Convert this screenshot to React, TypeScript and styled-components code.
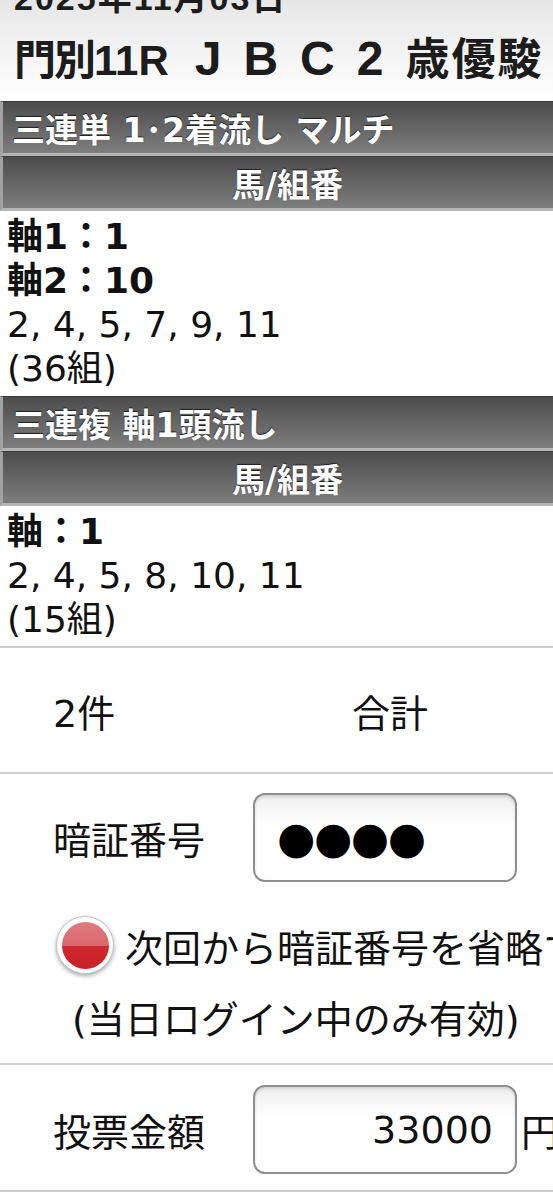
import React, { ReactElement } from 'react';
import styled, { createGlobalStyle } from 'styled-components';

const bodyFont = `"DejaVu Sans", "Noto Sans CJK JP", sans-serif`;
const headFont = `"Liberation Sans", "Noto Sans CJK JP", sans-serif`;

const GlobalStyle = createGlobalStyle`
  html, body {
    margin: 0;
    padding: 0;
    background: #ffffff;
    overflow: hidden;
  }
  body {
    font-family: ${bodyFont};
    color: #111111;
  }
`;

const Page = styled.div`
  width: 572px;
  overflow: hidden;
`;

const Header = styled.header`
  margin-top: -26px;
  padding: 0 0 12px 14px;
  background: linear-gradient(#e0e0e0, #f3f3f3 60%, #ffffff);
  font-family: ${headFont};
  color: #1c1c1c;
  white-space: nowrap;
`;

const DateLine = styled.div`
  font-size: 34px;
  line-height: 48px;
  font-weight: 700;
  letter-spacing: 2px;
`;

const Title = styled.h1`
  margin: 9px 0 0;
  font-size: 44px;
  line-height: 56px;
  font-weight: 700;
`;

const TitlePart = styled.span<{ $size?: number; $spacing?: number; $shift?: number }>`
  font-size: ${(p) => p.$size ?? 44}px;
  letter-spacing: ${(p) => p.$spacing ?? 0}px;
  margin-left: ${(p) => p.$shift ?? 0}px;
`;

const Bar = styled.div<{ $center?: boolean }>`
  box-sizing: border-box;
  height: 55px;
  display: flex;
  align-items: center;
  justify-content: ${(p) => (p.$center ? 'center' : 'flex-start')};
  padding-left: ${(p) => (p.$center ? 0 : 9)}px;
  border-top: 1px solid #3a3a3a;
  border-bottom: 3px solid #b4b4b4;
  border-left: 3px solid #a2a2a2;
  background: linear-gradient(#4c4c4c, #7e7e7e);
  color: #ffffff;
  font-size: 33px;
  font-weight: 700;
  text-shadow: 0 -1px 1px #1e1e1e;
  white-space: nowrap;
`;

const Picks = styled.div<{ $divider?: boolean }>`
  padding: 4px 0 ${(p) => (p.$divider ? 4 : 5)}px 7px;
  font-size: 36px;
  line-height: 44px;
  border-bottom: ${(p) => (p.$divider ? '2px solid #cfcfcf' : 'none')};
`;

const PickLine = styled.div<{ $bold?: boolean }>`
  font-weight: ${(p) => (p.$bold ? 700 : 400)};
  white-space: nowrap;
`;

const Summary = styled.div`
  height: 124px;
  display: grid;
  grid-template-columns: 299px auto;
  align-items: center;
  padding-left: 53px;
  font-size: 38px;
  border-bottom: 2px solid #cfcfcf;
`;

const Block = styled.div<{ $top: number; $bottom: number }>`
  padding: ${(p) => p.$top}px 0 ${(p) => p.$bottom}px;
  border-bottom: 2px solid #cfcfcf;
  font-size: 38px;
  white-space: nowrap;
`;

const FieldRow = styled.div`
  display: grid;
  grid-template-columns: 200px 264px auto;
  align-items: center;
  padding-left: 53px;
`;

const InputBox = styled.div<{ $alignRight?: boolean }>`
  box-sizing: border-box;
  height: 89px;
  display: flex;
  align-items: center;
  justify-content: ${(p) => (p.$alignRight ? 'flex-end' : 'flex-start')};
  padding: 0 22px;
  border: 2px solid #8e8e8e;
  border-radius: 12px;
  background: linear-gradient(#eeeeee, #ffffff 35%);
  box-shadow: inset 0 2px 3px rgba(0, 0, 0, 0.12);
`;

const Mask = styled.span`
  font-size: 44px;
  letter-spacing: -1.5px;
  color: #000000;
`;

const Amount = styled.span`
  font-size: 38px;
  color: #111111;
`;

const Unit = styled.span`
  margin-left: 4px;
`;

const CheckRow = styled.label`
  display: flex;
  align-items: center;
  gap: 11px;
  margin-top: 33px;
  padding-left: 56px;
  height: 60px;
`;

const Radio = styled.span`
  flex: none;
  box-sizing: border-box;
  width: 58px;
  height: 58px;
  border-radius: 50%;
  background: #ffffff;
  border: 1px solid #c4c4c4;
  box-shadow: 0 2px 4px rgba(0, 0, 0, 0.35);
  display: flex;
  align-items: center;
  justify-content: center;

  &::after {
    content: '';
    width: 47px;
    height: 47px;
    border-radius: 50%;
    background: linear-gradient(#e07c82, #d8666c 50%, #d0282e 50%, #c62126);
  }
`;

const Note = styled.div`
  padding-left: 72px;
  margin-top: 20px;
  line-height: 50px;
`;

interface PickSectionProps {
  title: string;
  axes: string[];
  others: string;
  count: string;
  divider?: boolean;
}

function PickSection({ title, axes, others, count, divider }: PickSectionProps): ReactElement {
  return (
    <section>
      <Bar>{title}</Bar>
      <Bar $center>馬/組番</Bar>
      <Picks $divider={divider}>
        {axes.map((axis) => (
          <PickLine $bold key={axis}>
            {axis}
          </PickLine>
        ))}
        <PickLine>{others}</PickLine>
        <PickLine>{count}</PickLine>
      </Picks>
    </section>
  );
}

export default function App(): ReactElement {
  return (
    <Page>
      <GlobalStyle />
      <Header>
        <DateLine>2025年11月03日</DateLine>
        <Title>
          <TitlePart $size={42} $spacing={-2}>
            門別
          </TitlePart>
          <TitlePart $size={42}>11R</TitlePart>
          <TitlePart $size={48} $spacing={22} $shift={26}>
            JBC2
          </TitlePart>
          <TitlePart $spacing={2}>歳優駿（Ｊｐｎ２）</TitlePart>
        </Title>
      </Header>

      <PickSection
        title="三連単 1･2着流し マルチ"
        axes={['軸1：1', '軸2：10']}
        others="2, 4, 5, 7, 9, 11"
        count="(36組)"
      />
      <PickSection
        title="三連複 軸1頭流し"
        axes={['軸：1']}
        others="2, 4, 5, 8, 10, 11"
        count="(15組)"
        divider
      />

      <Summary>
        <span>2件</span>
        <span>合計</span>
      </Summary>

      <Block $top={19} $bottom={18}>
        <FieldRow>
          <span>暗証番号</span>
          <InputBox>
            <Mask>●●●●</Mask>
          </InputBox>
        </FieldRow>
        <CheckRow>
          <Radio />
          <span>次回から暗証番号を省略する</span>
        </CheckRow>
        <Note>(当日ログイン中のみ有効)</Note>
      </Block>

      <Block $top={20} $bottom={16}>
        <FieldRow>
          <span>投票金額</span>
          <InputBox $alignRight>
            <Amount>33000</Amount>
          </InputBox>
          <Unit>円</Unit>
        </FieldRow>
      </Block>
    </Page>
  );
}
